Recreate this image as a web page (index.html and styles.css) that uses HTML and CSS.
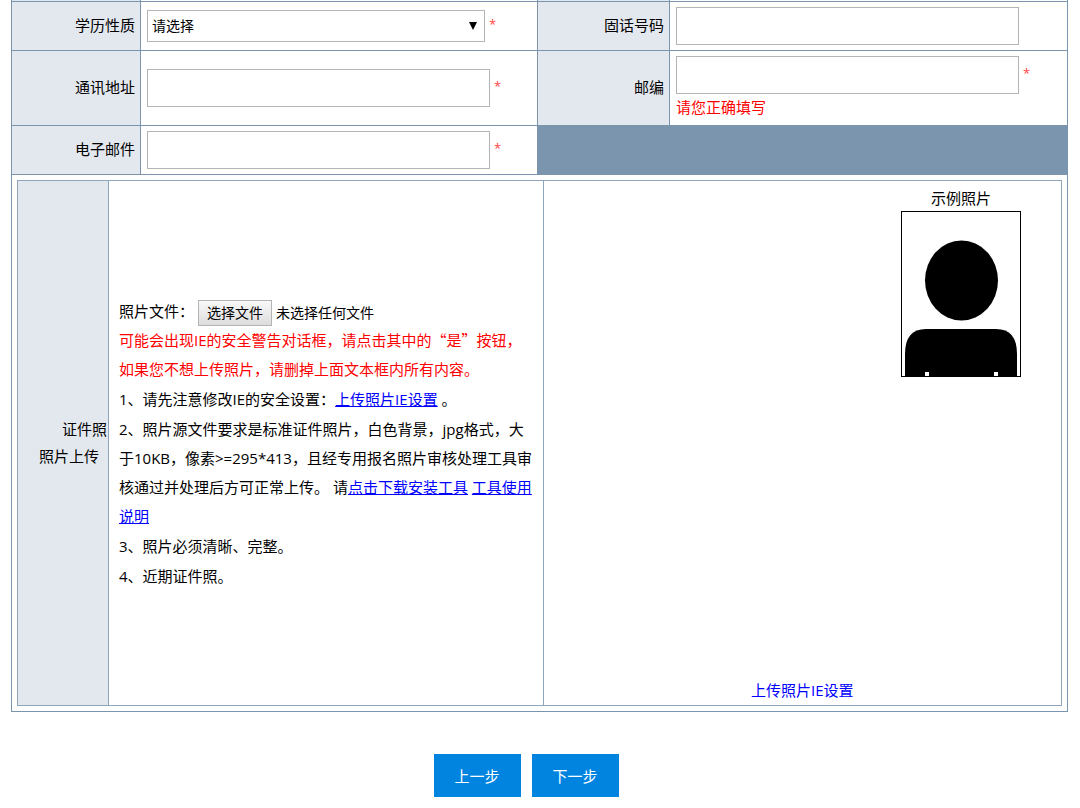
FILE: index.html
```html
<!DOCTYPE html>
<html lang="zh-CN">
<head>
  <meta charset="UTF-8">
  <meta name="viewport" content="width=device-width, initial-scale=1.0">
  <title>网上报名</title>
  <link rel="stylesheet" href="styles.css">
</head>
<body>
  <form class="formulario">
    <div class="tabla">
      <div class="titulo corte"></div>
      <div class="campo corte"></div>
      <div class="titulo corte"></div>
      <div class="campo corte"></div>

      <div class="titulo"><label for="xueli">学历性质</label></div>
      <div class="campo">
        <span class="lista">
          <select id="xueli">
            <option>请选择</option>
          </select>
        </span>
        <span class="req">*</span>
      </div>
      <div class="titulo"><label for="guhua">固话号码</label></div>
      <div class="campo"><input type="text" class="texto" id="guhua"></div>

      <div class="titulo"><label for="dizhi">通讯地址</label></div>
      <div class="campo">
        <input type="text" class="texto" id="dizhi">
        <span class="req">*</span>
      </div>
      <div class="titulo"><label for="youbian">邮编</label></div>
      <div class="campo">
        <input type="text" class="texto" id="youbian">
        <span class="req">*</span>
        <span class="error">请您正确填写</span>
      </div>

      <div class="titulo"><label for="email">电子邮件</label></div>
      <div class="campo">
        <input type="text" class="texto" id="email">
        <span class="req">*</span>
      </div>

      <div class="fila-foto">
        <div class="foto">
          <div class="foto-titulo">
            <span>证件照</span>
            <span class="sub">照片上传</span>
          </div>
          <div class="foto-notas">
            <div class="archivo">
              <label for="zhaopian">照片文件：</label>
              <span class="selector">
                <span class="boton-archivo">选择文件</span>
                <span>未选择任何文件</span>
                <input type="file" id="zhaopian">
              </span>
            </div>
            <p class="aviso">可能会出现IE的安全警告对话框，请点击其中的<span class="comillas">“是”</span>按钮，<br>如果您不想上传照片，请删掉上面文本框内所有内容。</p>
            <p>1、请先注意修改IE的安全设置：<a href="#">上传照片IE设置</a> 。</p>
            <p>2、照片源文件要求是标准证件照片，白色背景，jpg格式，大<br>于10KB，像素&gt;=295*413，且经专用报名照片审核处理工具审核通过并处理后方可正常上传。 请<a href="#">点击下载安装工具</a> <a href="#">工具使用说明</a></p>
            <p>3、照片必须清晰、完整。</p>
            <p>4、近期证件照。</p>
          </div>
          <div class="foto-vista">
            <figure>
              <figcaption>示例照片</figcaption>
              <svg width="120" height="166" viewBox="0 0 120 166">
                <rect x="0.5" y="0.5" width="119" height="165" fill="#fff" stroke="#000"/>
                <ellipse cx="60.5" cy="69.5" rx="36.5" ry="40"/>
                <path d="M4 166V143Q4 118 25 118H95Q116 118 116 143V166Z"/>
                <path d="M24 161h4v4h-4zM93 161h4v4h-4z" fill="#fff"/>
              </svg>
            </figure>
            <a href="#" class="ayuda">上传照片IE设置</a>
          </div>
        </div>
      </div>
    </div>

    <div class="acciones">
      <button type="button">上一步</button>
      <button type="button">下一步</button>
    </div>
  </form>
</body>
</html>
```

FILE: styles.css
```css
* {
  box-sizing: border-box;
}

body {
  margin: 0;
  background-color: #fff;
  color: #000;
  font-family: "Open Sans", "Noto Sans CJK SC", sans-serif;
  font-size: 15px;
  line-height: 22px;
}

.formulario {
  margin: 0 12px 0 11px;
}

/* las lineas son el fondo que se ve entre las celdas */
.tabla {
  display: grid;
  grid-template-columns: 128px 396fr 131px 397fr;
  gap: 1px;
  padding: 0 1px 1px;
  background-color: #7b95ae;
}

.titulo {
  display: flex;
  align-items: center;
  justify-content: flex-end;
  padding: 0 5px 2px 0;
  background-color: #e3e8ef;
}

.campo {
  display: flex;
  flex-wrap: wrap;
  align-items: center;
  align-content: center;
  min-height: 48px;
  padding: 5px 6px;
  background-color: #fff;
}

.corte {
  min-height: 0;
  height: 1px;
  padding: 0;
}

.texto {
  width: 343px;
  max-width: 90%;
  height: 38px;
  padding: 0 5px;
  border: 1px solid #b4b4b4;
  font: inherit;
}

.lista {
  position: relative;
  width: 338px;
  max-width: 90%;
}

.lista select {
  display: block;
  width: 100%;
  height: 32px;
  padding: 0 4px;
  border: 1px solid #b4b4b4;
  border-radius: 0;
  background-color: #fff;
  color: #000;
  font: inherit;
  font-size: 14px;
  appearance: none;
}

.lista::after {
  content: "";
  position: absolute;
  top: 12px;
  right: 8px;
  border: 4px solid transparent;
  border-top: 8px solid #000;
  border-bottom: 0;
  pointer-events: none;
}

.req {
  margin-left: 4px;
  padding-bottom: 4px;
  color: #f44;
  font-size: 13px;
}

.error {
  width: 100%;
  height: 26px;
  line-height: 26px;
  color: #f00;
}

.fila-foto {
  grid-column: 1 / -1;
  padding: 5px;
  background-color: #fff;
}

.foto {
  display: grid;
  grid-template-columns: 90px 434fr 518fr;
  gap: 1px;
  min-height: 526px;
  padding: 1px;
  background-color: #8fa5bb;
}

.foto-titulo {
  display: flex;
  flex-direction: column;
  align-items: flex-end;
  justify-content: center;
  padding: 0 1px 0 0;
  background-color: #e3e8ef;
  line-height: 27px;
}

.foto-titulo .sub {
  padding-right: 8px;
}

.foto-notas {
  display: flex;
  flex-direction: column;
  justify-content: center;
  gap: 1px;
  padding: 3px 2px 0 10px;
  background-color: #fff;
  line-height: 29px;
}

.foto-notas p {
  margin: 0;
}

.archivo {
  display: flex;
  align-items: center;
  gap: 4px;
  height: 26px;
}

.selector {
  position: relative;
  display: flex;
  align-items: center;
  gap: 4px;
  padding-top: 3px;
  font-size: 14px;
}

.selector input {
  position: absolute;
  top: 0;
  left: 0;
  width: 100%;
  height: 100%;
  opacity: 0;
}

.boton-archivo {
  padding: 0 8px;
  border: 1px solid #b4b4b4;
  background-image: linear-gradient(#f8f8f8, #ddd);
  line-height: 24px;
}

.aviso {
  color: #f00;
}

.comillas {
  font-family: "Noto Sans CJK SC", sans-serif;
}

a {
  color: #00f;
}

.foto-vista {
  display: flex;
  flex-direction: column;
  align-items: center;
  justify-content: space-between;
  padding: 6px 0 4px;
  background-color: #fff;
}

.foto-vista figure {
  align-self: flex-end;
  margin: 0 40px 0 0;
  text-align: center;
}

.foto-vista svg {
  display: block;
  margin-top: 2px;
}

.ayuda {
  text-decoration: none;
}

.acciones {
  display: flex;
  justify-content: center;
  gap: 11px;
  padding: 42px 27px 11px 0;
}

.acciones button {
  width: 87px;
  height: 43px;
  padding: 0;
  border: 0;
  background-color: #0084e0;
  color: #fff;
  font: inherit;
}
```
